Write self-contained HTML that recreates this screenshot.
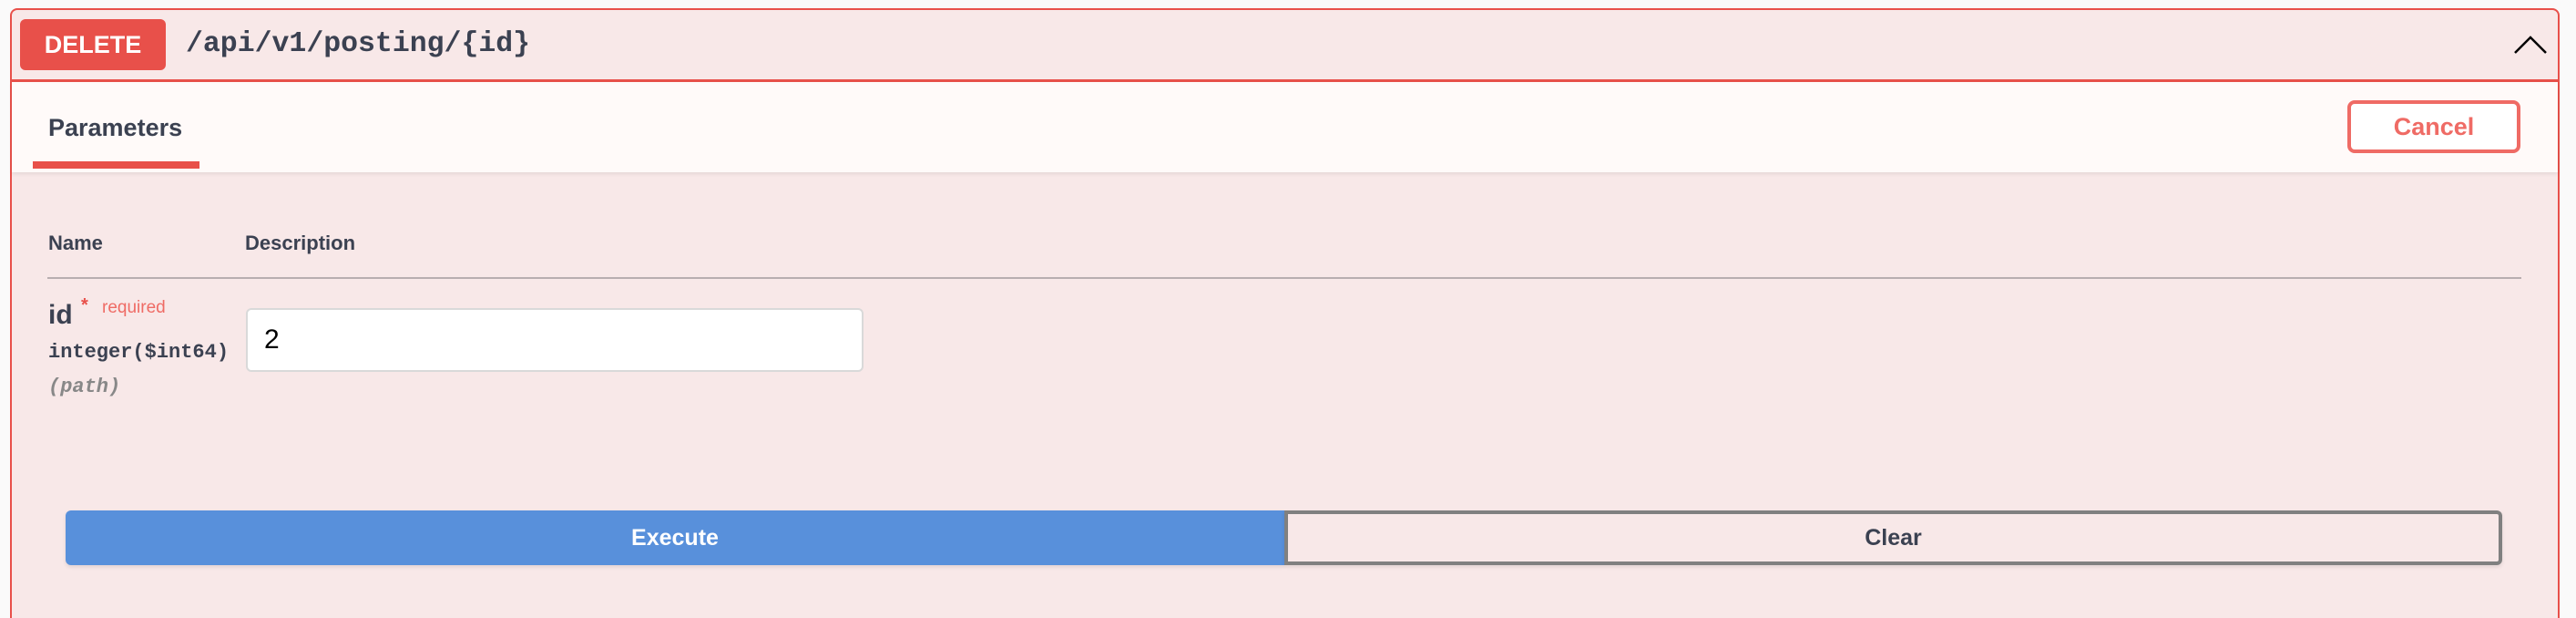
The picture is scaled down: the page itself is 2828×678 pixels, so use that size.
<!DOCTYPE html>
<html style="width:2828px;height:678px;overflow:hidden"><head><style>
*{box-sizing:border-box;margin:0;padding:0}
body{width:2828px;height:678px;background:#fafafa;position:relative;overflow:hidden;font-family:"Liberation Sans",Arial,sans-serif;color:#3b4151}
.box{position:absolute;left:11px;top:9px;width:2799px;height:669px;border:2px solid #e8504a;border-bottom:none;border-radius:8px 8px 0 0;background:#f8e8e8}
.abs{position:absolute}
</style></head><body>
<div class="box"></div>
<div class="abs" style="left:13px;top:87px;width:2795px;height:3px;background:#e8504a"></div>
<div class="abs" style="left:22px;top:21px;width:160px;height:56px;background:#e8504a;border-radius:6px;color:#fff;font-weight:bold;font-size:27px;line-height:56px;text-align:center">DELETE</div>
<div class="abs" style="left:204px;top:28px;font-family:'Liberation Mono',monospace;font-weight:bold;font-size:31.5px;line-height:42px;color:#3b4151">/api/v1/posting/{id}</div>
<svg class="abs" style="left:2758px;top:36px" width="40" height="26" viewBox="0 0 40 26"><path d="M3 22 L20 5 L37 22" fill="none" stroke="#000" stroke-width="2.5"/></svg>
<div class="abs" style="left:13px;top:90px;width:2795px;height:99px;background:#fffaf9;box-shadow:0 2px 4px rgba(0,0,0,.08)"></div>
<div class="abs" style="left:53px;top:120px;font-weight:bold;font-size:27px;line-height:40px">Parameters</div>
<div class="abs" style="left:36px;top:177px;width:183px;height:8px;background:#e8504a"></div>
<div class="abs" style="left:2577px;top:110px;width:190px;height:58px;border:4px solid #ef6b65;border-radius:8px;background:#fff;color:#ef6b65;font-weight:bold;font-size:27px;line-height:50px;text-align:center">Cancel</div>
<div class="abs" style="left:53px;top:252px;font-weight:bold;font-size:22px;line-height:30px">Name</div>
<div class="abs" style="left:269px;top:252px;font-weight:bold;font-size:22px;line-height:30px">Description</div>
<div class="abs" style="left:52px;top:304px;width:2716px;height:2px;background:#b8aeb0"></div>
<div class="abs" style="left:53px;top:326px;font-weight:bold;font-size:30px;line-height:40px">id</div>
<div class="abs" style="left:89px;top:324px;color:#e8504a;font-size:20px;font-weight:bold">*</div>
<div class="abs" style="left:112px;top:325px;color:#ef6b65;font-size:19px;line-height:26px">required</div>
<div class="abs" style="left:53px;top:372px;font-family:'Liberation Mono',monospace;font-weight:bold;font-size:22px;line-height:30px">integer($int64)</div>
<div class="abs" style="left:53px;top:410px;font-family:'Liberation Mono',monospace;font-style:italic;font-weight:bold;font-size:22px;line-height:30px;color:#888">(path)</div>
<div class="abs" style="left:270px;top:338px;width:678px;height:70px;background:#fff;border:2px solid #d9d9d9;border-radius:6px;font-size:30px;line-height:66px;padding-left:18px;color:#000">2</div>
<div class="abs" style="left:72px;top:560px;width:1338px;height:60px;background:#5890db;border-radius:6px 0 0 6px;color:#fff;font-weight:bold;font-size:25px;line-height:60px;text-align:center;box-shadow:0 2px 4px rgba(0,0,0,.1)">Execute</div>
<div class="abs" style="left:1410px;top:560px;width:1337px;height:60px;border:4px solid #808080;border-radius:0 6px 6px 0;color:#3b4151;font-weight:bold;font-size:25px;line-height:52px;text-align:center;box-shadow:0 2px 4px rgba(0,0,0,.1)">Clear</div>
</body></html>
